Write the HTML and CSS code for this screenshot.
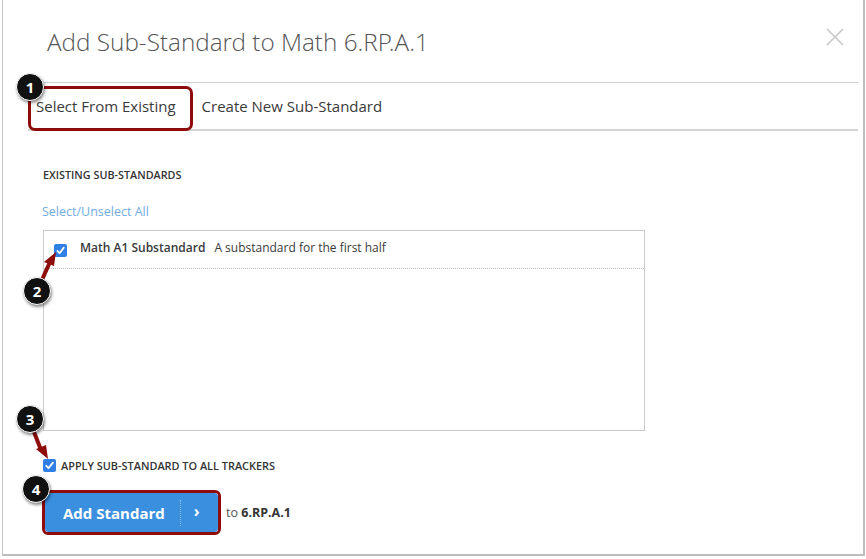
FILE: index.html
```html
<!DOCTYPE html>
<html>
<head>
<meta charset="utf-8">
<link rel="stylesheet" href="styles.css">
</head>
<body>
<div class="modal">
  <div class="header">
    <h1 class="title">Add Sub-Standard to Math 6.RP.A.1</h1>
    <svg class="close" width="18" height="18" viewBox="0 0 18 18"><path d="M1 1L17 17M17 1L1 17" stroke="#c8c8c8" stroke-width="1.6" fill="none"/></svg>
  </div>
  <div class="tabs">
    <div class="tab active">Select From Existing</div>
    <div class="tab">Create New Sub-Standard</div>
  </div>
  <div class="content">
    <div class="section-label">EXISTING SUB-STANDARDS</div>
    <a class="select-all">Select/Unselect All</a>
    <div class="list">
      <div class="row">
        <span class="check"><svg width="13" height="13" viewBox="0 0 13 13"><path d="M3.5 7L5.6 9.2L9.8 3.6" stroke="#fff" stroke-width="1.8" fill="none" stroke-linecap="round" stroke-linejoin="round"/></svg></span>
        <span class="row-name">Math A1 Substandard</span>
        <span class="row-desc">A substandard for the first half</span>
      </div>
    </div>
    <label class="apply">
      <span class="check"><svg width="13" height="13" viewBox="0 0 13 13"><path d="M3.2 6.8L5.5 9.2L9.9 3.6" stroke="#fff" stroke-width="1.8" fill="none" stroke-linecap="round" stroke-linejoin="round"/></svg></span>
      <span>APPLY SUB-STANDARD TO ALL TRACKERS</span>
    </label>
    <div class="actions">
      <div class="btn-wrap">
        <button class="btn"><span class="btn-label">Add Standard</span><span class="btn-sep"></span><span class="btn-chev">&#8250;</span></button>
      </div>
      <span class="to">to <b>6.RP.A.1</b></span>
    </div>
  </div>

  <div class="hl hl-tab"></div>

  <svg class="arrows" width="866" height="559" viewBox="0 0 866 559">
    <path d="M41 282L50 262" stroke="#8e0c0c" stroke-width="4" fill="none"/>
    <path d="M56 252L44 262L54 266Z" fill="#8e0c0c"/>
    <path d="M34 432L41 450" stroke="#8e0c0c" stroke-width="4" fill="none"/>
    <path d="M48 459L36 449L46 445Z" fill="#8e0c0c"/>
  </svg>

  <div class="badge b1">1</div>
  <div class="badge b2">2</div>
  <div class="badge b3">3</div>
  <div class="badge b4">4</div>
</div>
</body>
</html>
```
FILE: styles.css
```css
* { box-sizing: border-box; }
html, body { margin: 0; padding: 0; background: #fff; }
body {
  font-family: "Open Sans", "Noto Sans", sans-serif;
  color: #333;
  width: 866px;
  height: 559px;
  overflow: hidden;
}
.modal {
  position: relative;
  margin-left: 2px;
  width: 863px;
  height: 556px;
  border-left: 1px solid #c4c4c4;
  border-right: 2px solid #bdbdbd;
  border-bottom: 2px solid #bdbdbd;
  background: #fff;
}
.header {
  height: 82px;
  display: flex;
  justify-content: space-between;
  align-items: flex-start;
  padding: 0 19px 0 44px;
}
.title {
  margin: 26px 0 0;
  font-family: "Open Sans Light", "Open Sans", sans-serif;
  font-size: 24.3px;
  font-weight: 300;
  line-height: 32px;
  color: #555;
  letter-spacing: 0;
}
.close { margin-top: 28px; }
.tabs {
  margin: 0 5px 0 25px;
  height: 49px;
  border-top: 1px solid #cfcfcf;
  border-bottom: 2px solid #d4d4d4;
  display: flex;
  align-items: center;
  gap: 26px;
  padding-left: 8px;
  padding-top: 0;
}
.tab {
  font-size: 15px;
  color: #3a3a3a;
}
.content {
  padding-left: 40px;
}
.section-label {
  margin-top: 37px;
  font-size: 10.8px;
  font-weight: 600;
  line-height: 14px;
  color: #333;
}
.select-all {
  display: block;
  margin-top: 22px;
  margin-left: -1px;
  font-size: 12.5px;
  line-height: 16px;
  color: #72ace4;
}
.list {
  margin-top: 10px;
  width: 602px;
  height: 201px;
  border: 1px solid #cbcbcb;
}
.row {
  height: 38px;
  border-bottom: 1px dotted #bdbdbd;
  display: flex;
  align-items: center;
  padding-left: 10px;
  padding-bottom: 5px;
  font-size: 12px;
}
.check {
  width: 13px;
  height: 13px;
  border-radius: 2px;
  background: #2f7fe6;
  display: inline-flex;
  flex: none;
}
.row .check { margin-top: 6px; }
.row-name {
  font-weight: 600;
  color: #3a3a3a;
  margin-left: 13px;
}
.row-desc {
  margin-left: 9px;
  color: #3a3a3a;
}
.apply {
  display: flex;
  align-items: center;
  gap: 5px;
  margin-top: 27px;
  font-size: 10.9px;
  font-weight: 600;
  color: #333;
}
.actions {
  display: flex;
  align-items: center;
  margin-top: 17px;
  margin-left: -1px;
}
.btn-wrap {
  border: 3px solid #8e0c0c;
  border-radius: 6px;
  padding: 0;
}
.btn {
  width: 173px;
  height: 39px;
  background: #3a8fdf;
  border: none;
  border-radius: 4px;
  display: flex;
  align-items: center;
  padding: 0 0 0 18px;
  font-family: "Open Sans", sans-serif;
  color: #fff;
}
.btn-label {
  font-size: 15px;
  font-weight: 700;
}
.btn-sep {
  width: 0;
  height: 26px;
  border-left: 1px dotted #8fbff0;
  margin-left: 15px;
}
.btn-chev {
  font-size: 16px;
  font-weight: 700;
  margin-left: 13px;
  margin-top: -3px;
}
.to {
  margin-left: 5px;
  font-size: 12.5px;
  color: #555;
}
.to b { color: #333; }

.hl {
  position: absolute;
  border: 3px solid #8e0c0c;
  border-radius: 7px;
}
.hl-tab {
  left: 25px;
  top: 86px;
  width: 165px;
  height: 45px;
}
.arrows {
  position: absolute;
  left: -3px;
  top: 0;
  pointer-events: none;
}
.badge {
  position: absolute;
  width: 28px;
  height: 28px;
  border-radius: 50%;
  background: #111;
  border: 1px solid #fff;
  color: #fff;
  font-family: "Open Sans", sans-serif;
  font-weight: 700;
  font-size: 15px;
  line-height: 26px;
  text-align: center;
  box-shadow: 1px 2px 3px rgba(0,0,0,0.45);
}
.b1 { left: 13px; top: 73px; }
.b2 { left: 20px; top: 277px; }
.b3 { left: 13px; top: 405px; }
.b4 { left: 19px; top: 475px; }
```
